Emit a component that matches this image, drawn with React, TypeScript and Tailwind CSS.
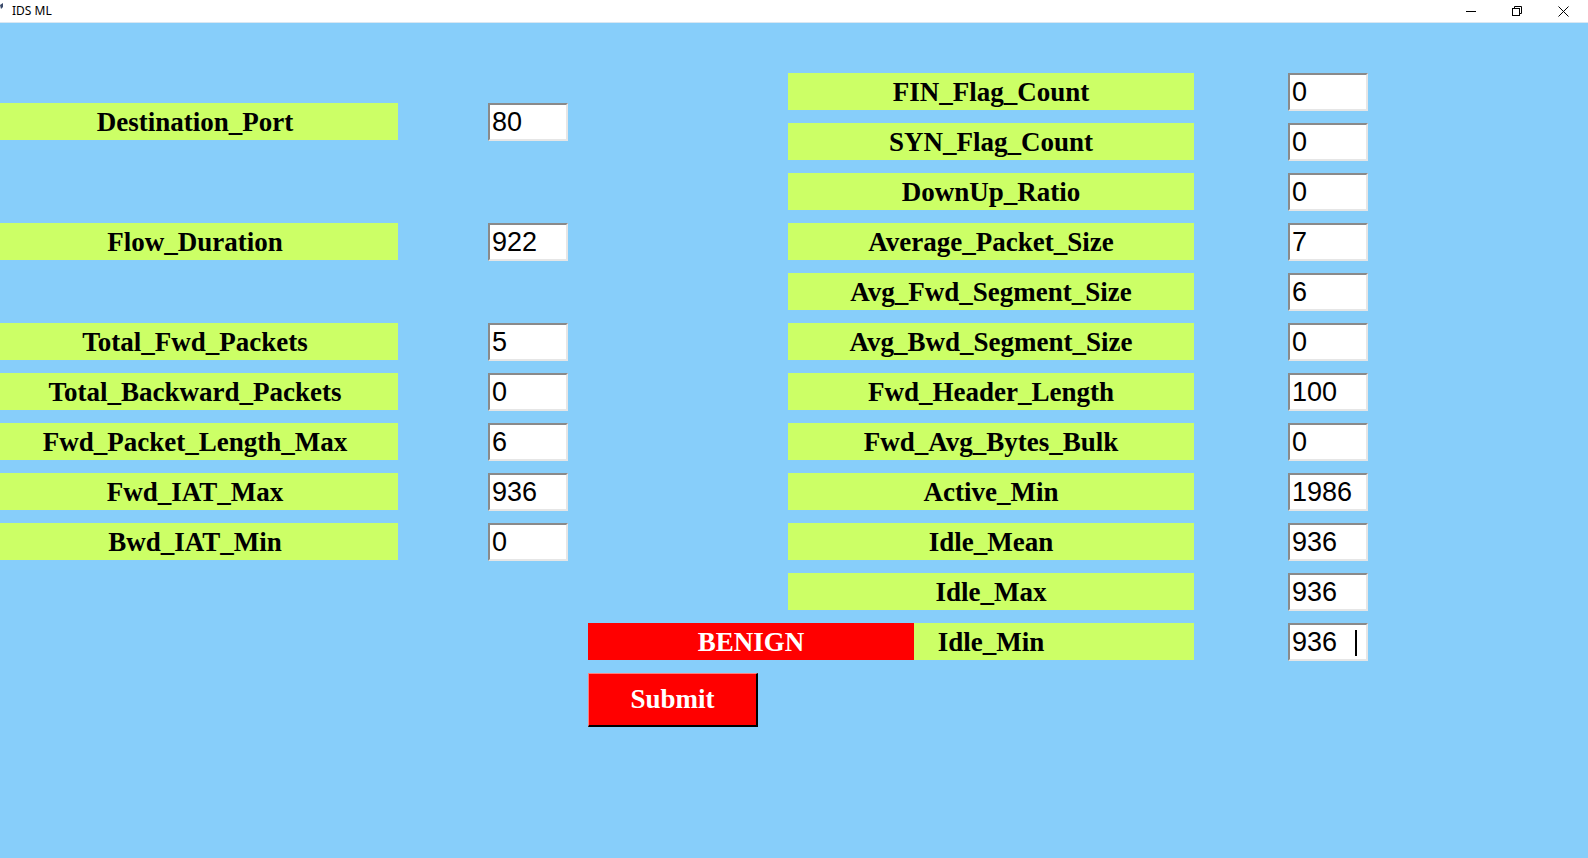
const leftRows: { label: string; value: string; gapBefore: number }[] = [
  { label: 'Destination_Port', value: '80', gapBefore: 0 },
  { label: 'Flow_Duration', value: '922', gapBefore: 70 },
  { label: 'Total_Fwd_Packets', value: '5', gapBefore: 50 },
  { label: 'Total_Backward_Packets', value: '0', gapBefore: 0 },
  { label: 'Fwd_Packet_Length_Max', value: '6', gapBefore: 0 },
  { label: 'Fwd_IAT_Max', value: '936', gapBefore: 0 },
  { label: 'Bwd_IAT_Min', value: '0', gapBefore: 0 },
]

const rightRows: { label: string; value: string }[] = [
  { label: 'FIN_Flag_Count', value: '0' },
  { label: 'SYN_Flag_Count', value: '0' },
  { label: 'DownUp_Ratio', value: '0' },
  { label: 'Average_Packet_Size', value: '7' },
  { label: 'Avg_Fwd_Segment_Size', value: '6' },
  { label: 'Avg_Bwd_Segment_Size', value: '0' },
  { label: 'Fwd_Header_Length', value: '100' },
  { label: 'Fwd_Avg_Bytes_Bulk', value: '0' },
  { label: 'Active_Min', value: '1986' },
  { label: 'Idle_Mean', value: '936' },
  { label: 'Idle_Max', value: '936' },
  { label: 'Idle_Min', value: '936 ' },
]

const serif = { fontFamily: '"Liberation Serif", "Times New Roman", serif' }

function Label({ text, className = '' }: { text: string; className?: string }) {
  return (
    <div
      className={`w-[406px] h-[37px] shrink-0 bg-[#ccff66] flex items-center justify-center pt-[2px] text-[27px] font-bold text-black leading-none ${className}`}
      style={serif}
    >
      {text}
    </div>
  )
}

function Entry({ value, caret }: { value: string; caret?: boolean }) {
  return (
    <div className="relative w-[80px] h-[38px]">
      <input
        readOnly
        value={value}
        className="w-full h-full bg-white border-2 border-t-[#8a8a8a] border-l-[#8a8a8a] border-b-[#e6e6e6] border-r-[#e6e6e6] pl-[2px] pt-[1px] text-[27px] text-black outline-none leading-none"
        style={{ fontFamily: '"Liberation Sans", Arial, sans-serif' }}
      />
      {caret && <span className="absolute left-[67px] top-[7px] w-[2px] h-[26px] bg-black" />}
    </div>
  )
}

function TitleBar() {
  return (
    <div className="h-[23px] bg-white flex items-center border-b border-[#d9e7f2]">
      <svg width="5" height="10" viewBox="0 0 5 10" className="-mt-[6px]">
        <path d="M0 2 L3 0 L3 4 L1 6 Z" fill="#3a4a6a" />
      </svg>
      <span className="ml-[7px] text-[12px] text-black" style={{ fontFamily: '"Noto Sans", "Open Sans", sans-serif' }}>
        IDS ML
      </span>
      <div className="ml-auto flex items-center h-full">
        <div className="w-[46px] h-full flex items-center justify-center">
          <svg width="10" height="10" viewBox="0 0 10 10">
            <path d="M0 5.5 H10" stroke="#000" strokeWidth="1" />
          </svg>
        </div>
        <div className="w-[46px] h-full flex items-center justify-center">
          <svg width="10" height="10" viewBox="0 0 10 10">
            <rect x="0.5" y="2.5" width="7" height="7" fill="none" stroke="#000" strokeWidth="1" />
            <path d="M2.5 2.5 V0.5 H9.5 V7.5 H7.5" fill="none" stroke="#000" strokeWidth="1" />
          </svg>
        </div>
        <div className="w-[46px] h-full flex items-center justify-center mr-[2px]">
          <svg width="11" height="11" viewBox="0 0 11 11">
            <path d="M0.5 0.5 L10.5 10.5 M10.5 0.5 L0.5 10.5" stroke="#000" strokeWidth="1" />
          </svg>
        </div>
      </div>
    </div>
  )
}

export default function App() {
  return (
    <div className="w-[1588px] h-[858px] flex flex-col overflow-hidden bg-[#87cefa]">
      <TitleBar />
      <div className="flex-1 flex flex-col">
        <div className="flex">
          {/* left column: label starts a little off the window edge */}
          <div className="w-[568px] flex flex-col pt-[80px]">
            {leftRows.map((r) => (
              <div key={r.label} style={{ marginTop: r.gapBefore }} className="h-[50px] flex items-start">
                <Label text={r.label} className="-ml-[8px]" />
                <div className="ml-[90px]">
                  <Entry value={r.value} />
                </div>
              </div>
            ))}
          </div>

          {/* right column */}
          <div className="ml-[220px] flex flex-col pt-[50px]">
            {rightRows.map((r, i) => {
              const last = i === rightRows.length - 1
              return (
                <div key={r.label} className="relative h-[50px] flex items-start">
                  <Label text={r.label} />
                  <div className="ml-[94px]">
                    <Entry value={r.value} caret={last} />
                  </div>
                  {last && (
                    <div
                      className="absolute left-[-200px] top-0 w-[326px] h-[37px] bg-[#ff0000] text-white text-[27px] font-bold flex items-center justify-center pt-[2px] leading-none"
                      style={serif}
                    >
                      BENIGN
                    </div>
                  )}
                </div>
              )
            })}
          </div>
        </div>

        <div className="pl-[588px]">
          <button
            className="w-[170px] h-[54px] bg-[#ff0000] text-white text-[27px] font-bold leading-none border-t border-l border-b-2 border-r-2 border-t-[#ff8080] border-l-[#ff8080] border-b-black border-r-black"
            style={serif}
          >
            Submit
          </button>
        </div>
      </div>
    </div>
  )
}
